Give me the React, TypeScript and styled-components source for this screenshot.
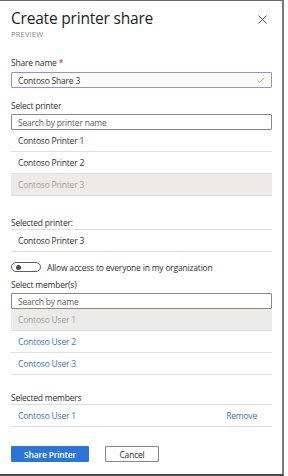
import styled, { createGlobalStyle } from "styled-components";

const GlobalStyle = createGlobalStyle`
    html, body { margin: 0; padding: 0; background: #ffffff; }
    * { box-sizing: border-box; }
    body { font-family: "Open Sans", "Noto Sans", sans-serif; color: #323130; }
`;

const printers = ["Contoso Printer 1", "Contoso Printer 2", "Contoso Printer 3"];
const users = ["Contoso User 1", "Contoso User 2", "Contoso User 3"];

const App = () => {
    const selectedPrinter = "Contoso Printer 3";
    const selectedUser = "Contoso User 1";

    return (
        <>
            <GlobalStyle />
            <Panel>
                <Header>
                    <div>
                        <Title>Create printer share</Title>
                        <Subtitle>PREVIEW</Subtitle>
                    </div>
                    <CloseButton aria-label="Close">
                        <svg width="9" height="9" viewBox="0 0 9 9">
                            <path d="M0.5 0.5L8.5 8.5M8.5 0.5L0.5 8.5" stroke="#555" strokeWidth="1" fill="none" />
                        </svg>
                    </CloseButton>
                </Header>

                <Label $top={17}>Share name <Required>*</Required></Label>
                <NameInput>
                    <span>Contoso Share 3</span>
                    <svg width="8" height="6" viewBox="0 0 8 6">
                        <path d="M0.5 3.2L2.8 5.4L7.5 0.6" stroke="#7db665" strokeWidth="1" fill="none" />
                    </svg>
                </NameInput>

                <Label $top={12}>Select printer</Label>
                <SearchBox>Search by printer name</SearchBox>
                <List>
                    {printers.map((p) => (
                        <ListItem key={p} $disabled={p === selectedPrinter}>{p}</ListItem>
                    ))}
                </List>

                <SectionLabel $top={21}>Selected printer:</SectionLabel>
                <ListItem>{selectedPrinter}</ListItem>

                <ToggleRow>
                    <Toggle><Knob /></Toggle>
                    <span>Allow access to everyone in my organization</span>
                </ToggleRow>

                <Label $top={5}>Select member(s)</Label>
                <SearchBox>Search by name</SearchBox>
                <List>
                    {users.map((u) => (
                        <ListItem key={u} $disabled={u === selectedUser} $link>{u}</ListItem>
                    ))}
                </List>

                <SectionLabel $top={17}>Selected members</SectionLabel>
                <MemberRow>
                    <span>{selectedUser}</span>
                    <span>Remove</span>
                </MemberRow>

                <Footer>
                    <PrimaryButton>Share Printer</PrimaryButton>
                    <SecondaryButton>Cancel</SecondaryButton>
                </Footer>
            </Panel>
        </>
    );
};

export default App;

// ================= STYLES =================

const Panel = styled.div`
    width: 284px; height: 476px;
    border-top: 1px solid #6b6b6b;
    border-right: 2px solid #7a7a7a;
    border-bottom: 2px solid #4a4a4a;
    padding: 0 10px 0 11px;
    display: flex; flex-direction: column;
    font-size: 8.5px; letter-spacing: -0.2px;
    background: #ffffff;
`;

const Header = styled.div`
    display: flex; justify-content: space-between; align-items: flex-start;
    padding-top: 7px;
`;

const Title = styled.h1`
    margin: 0; font-size: 15.5px; line-height: 20px; font-weight: 400;
    color: #201f1e; letter-spacing: -0.2px;
`;

const Subtitle = styled.div`
    font-size: 7.5px; line-height: 12px; color: #8a8886; letter-spacing: 0.2px;
`;

const CloseButton = styled.div`
    margin-top: 7px; margin-right: 5px; display: flex;
`;

const Label = styled.div<{ $top: number }>`
    margin-top: ${({ $top }) => $top}px;
    line-height: 12px; color: #323130;
`;

const Required = styled.span` color: #a4262c; `;

const SectionLabel = styled(Label)`
    border-bottom: 1px solid #e1dfdd;
    line-height: 12px; height: 13px;
`;

const NameInput = styled.div`
    margin-top: 3px; height: 16px;
    border: 1px solid #a887cc; border-radius: 1px;
    display: flex; align-items: center; justify-content: space-between;
    padding: 0 6px 0 6px;
`;

const SearchBox = styled.div`
    margin-top: 2px; height: 16px;
    border: 1px solid #8a8886; border-radius: 1px;
    display: flex; align-items: center; padding: 0 6px;
    color: #605e5c;
`;

const List = styled.div` display: flex; flex-direction: column; `;

const ListItem = styled.div<{ $disabled?: boolean; $link?: boolean }>`
    height: 22px; display: flex; align-items: center;
    padding: 0 7px; border-bottom: 1px solid #e1dfdd;
    background: ${({ $disabled }) => ($disabled ? "#edebe9" : "transparent")};
    color: ${({ $disabled, $link }) => ($disabled ? "#a19f9d" : $link ? "#3b73c4" : "#323130")};
`;

const ToggleRow = styled.div`
    margin-top: 8px; height: 14px;
    display: flex; align-items: center; gap: 6px;
`;

const Toggle = styled.div`
    width: 30px; height: 10px; border: 1px solid #605e5c; border-radius: 6px;
    display: flex; align-items: center; padding-left: 4px;
`;

const Knob = styled.div`
    width: 5px; height: 5px; border-radius: 50%; background: #4a4a4a;
`;

const MemberRow = styled.div`
    height: 22px; display: flex; align-items: center; justify-content: space-between;
    padding: 0 15px 0 7px; border-bottom: 1px solid #e1dfdd;
    color: #3b73c4;
`;

const Footer = styled.div`
    margin-top: 19px; display: flex; gap: 16px;
`;

const buttonBase = `
    height: 16px; display: flex; align-items: center; justify-content: center;
    font-size: 8.5px; border-radius: 1px;
`;

const PrimaryButton = styled.div`
    ${buttonBase}
    width: 78px; background: #2b74d8; color: #ffffff; font-weight: 600;
`;

const SecondaryButton = styled.div`
    ${buttonBase}
    width: 54px; background: #ffffff; color: #323130; border: 1px solid #8a8886;
`;
